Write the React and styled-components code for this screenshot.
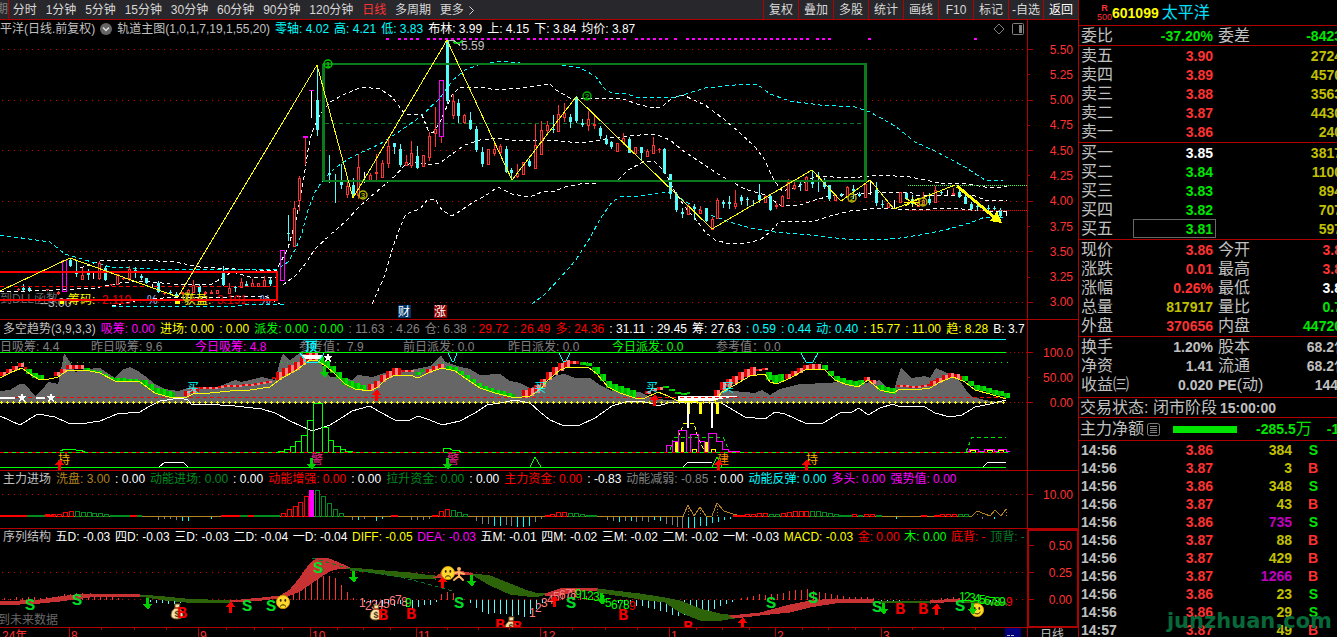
import React from "react";
import styled, { createGlobalStyle } from "styled-components";

const GlobalStyle = createGlobalStyle`
  * { box-sizing: border-box; }
  html, body { margin: 0; background: #000; overflow: hidden; }
  body { font: 12px/14px "Liberation Sans", "Noto Sans CJK SC", sans-serif; color: #c0c0c0; }
  button { font: inherit; color: inherit; background: none; border: 0; padding: 0; margin: 0; cursor: pointer; }
`;

const LINE = "#b00000";
const RED = "#ff3232";
const GREEN = "#00e600";
const CYAN = "#00ffff";
const AQUA = "#54fcfc";
const YELLOW = "#ffff00";
const GOLD = "#c0c000";
const MAG = "#ff00ff";
const GREY = "#808080";
const TXT = "#c0c0c0";

/* ---------- page frame ---------- */
const Screen = styled.div`
  display: grid;
  grid-template-columns: minmax(0, 1fr) 259px;
  height: 100vh;
  overflow: hidden;
`;
const Main = styled.main`
  display: flex;
  flex-direction: column;
  min-width: 0;
`;

/* ---------- toolbar ---------- */
const Toolbar = styled.nav`
  display: flex;
  justify-content: space-between;
  height: 20px;
  background: #28282c;
  border-bottom: 1px solid ${LINE};
  color: #d8d8d8;
  white-space: nowrap;
`;
const Periods = styled.div`
  display: flex;
  align-items: center;
  justify-content: space-between;
  width: 474px;
`;
const Stub = styled.span`
  width: 9px;
  height: 19px;
  line-height: 19px;
  margin-right: -5px;
  border-right: 1px solid ${LINE};
  overflow: hidden;
  direction: rtl;
  color: ${GREY};
`;
const Period = styled.button`
  color: ${(p) => (p.$active ? RED : "inherit")};
`;
const Chevron = styled.svg`
  width: 5px;
  height: 9px;
  margin-left: 5px;
  vertical-align: middle;
`;
const Tools = styled.div`
  display: flex;
`;
const Tool = styled.button`
  width: 35px;
  border-left: 1px solid ${LINE};
  color: ${(p) => (p.$strong ? "#fff" : "inherit")};
`;

/* ---------- chart panes ---------- */
const Pane = styled.section`
  display: grid;
  grid-template-columns: minmax(0, 1fr) 51px;
  flex: none;
  border-bottom: 1px solid ${LINE};
`;
const Plot = styled.div`
  min-width: 0;
  overflow: hidden;
`;
const Legend = styled.header`
  display: flex;
  align-items: center;
  justify-content: ${(p) => (p.$fill ? "space-between" : "flex-start")};
  max-width: ${(p) => (p.$fill ? "1025px" : "none")};
  gap: ${(p) => (p.$fill ? 0 : 5)}px;
  height: ${(p) => p.$height}px;
  padding-left: ${(p) => p.$indent ?? 3}px;
  white-space: nowrap;
  overflow: hidden;
`;
const Item = styled.span`
  flex: none;
  color: ${(p) => p.$color || TXT};
`;
const Corner = styled.span`
  display: flex;
  gap: 7px;
  margin-left: auto;
  padding-right: 3px;
`;
const Canvas = styled.svg`
  display: block;
  width: 100%;
  height: ${(p) => p.$height}px;
  shape-rendering: crispEdges;
`;
const Axis = styled.div`
  display: flex;
  flex-direction: column;
  justify-content: space-between;
  padding: ${(p) => p.$pad};
  border: 0 solid ${LINE};
  border-width: ${(p) => (p.$framed ? "2px 1px 1px 2px" : "0 0 0 1px")};
`;
const Tick = styled.div`
  display: flex;
  align-items: center;
  justify-content: space-between;
  height: 13px;
  padding-right: 5px;
  color: ${RED};
  &::before {
    content: "";
    width: ${(p) => (p.$minor ? 2 : 5)}px;
    height: 1px;
    background: ${LINE};
  }
`;
const TimeAxis = styled.footer`
  display: grid;
  grid-template-columns: minmax(0, 1fr) 51px;
  height: 9px;
  overflow: hidden;
`;
const PeriodName = styled.span`
  padding-left: 12px;
  border-left: 1px solid ${LINE};
`;

/* ---------- quote panel ---------- */
const Side = styled.aside`
  position: relative;
  border-left: 1px solid ${LINE};
  overflow: hidden;
`;
const Block = styled.div`
  width: 272px;
  padding-bottom: ${(p) => p.$foot || 0}px;
  border-bottom: 1px solid ${LINE};
`;
const Title = styled.h1`
  display: flex;
  align-items: center;
  gap: 3px;
  width: 272px;
  height: 26px;
  margin: 0;
  padding-left: 18px;
  border-bottom: 1px solid ${LINE};
  font-size: 16px;
  font-weight: 400;
  color: #00e0ff;
`;
const Flag = styled.span`
  display: flex;
  flex-direction: column;
  align-items: center;
  width: 15px;
  font-size: 9px;
  line-height: 9px;
  color: ${RED};
`;
const Code = styled.strong`
  font-size: 14px;
  color: ${YELLOW};
  margin-left: -3px;
`;
const Table = styled.table`
  width: 271px;
  table-layout: fixed;
  border-collapse: separate;
  border-spacing: 0;
`;
const Row = styled.tr`
  height: ${(p) => p.$height || 19}px;
`;
const Name = styled.th`
  padding: 0 0 0 2px;
  font-size: 16px;
  line-height: 18px;
  font-weight: 400;
  text-align: left;
  white-space: nowrap;
  color: ${TXT};
`;
const Num = styled.td`
  padding: 0 ${(p) => p.$end ?? 3}px 0 ${(p) => (p.$left ? 2 : 0)}px;
  font-size: 14px;
  line-height: 16px;
  font-weight: 700;
  text-align: ${(p) => (p.$left ? "left" : "right")};
  white-space: nowrap;
  color: ${(p) => p.$color || TXT};
  outline: ${(p) => (p.$boxed ? "1px solid #686868" : "none")};
  outline-offset: -1px;
`;
const Small = styled.span`
  font-size: 16px;
  font-weight: 400;
`;
const Status = styled.p`
  display: flex;
  align-items: center;
  height: ${(p) => p.$height}px;
  margin: 0;
  padding-left: 1px;
  font-size: 16px;
  white-space: nowrap;
`;
const NoteIcon = styled.svg`
  width: 13px;
  height: 13px;
  margin-left: 3px;
`;
const Strong = styled.b`
  margin-left: ${(p) => p.$gap || 0}px;
  font-size: 14px;
  color: ${(p) => p.$color || TXT};
`;
const FlowBar = styled.span`
  width: 64px;
  height: 7px;
  margin: 0 19px 0 13px;
  background: ${GREEN};
`;
const Watermark = styled.div`
  position: absolute;
  top: 609px;
  right: 5px;
  font: 700 21px/24px "DejaVu Sans", sans-serif;
  color: #06693a;
`;

/* ---------- price chart data ---------- */
/* x, high, low, body top, body bottom, kind */
const CANDLES = `
18 288 291 289 290 r;23 284 291 288 290 c;29 286 292 288 290 c;47 289 291 289 290 r;58 291 295 292 294 r;70 259 267 260 266 c;76 261 277 272 274 c;
82 268 280 275 279 r;88 269 280 273 275 c;93 273 279 276 276 w;99 261 280 263 278 r;105 266 281 268 280 c;
111 284 286 284 285 r;117 274 284 274 284 r;123 277 280 278 279 r;129 266 281 269 278 r;135 267 278 270 272 c;
141 274 280 276 278 c;146 278 284 278 283 c;152 284 288 286 286 w;158 281 293 283 292 c;164 292 295 293 294 r;
170 290 295 292 293 c;176 292 297 294 296 c;182 292 295 292 294 r;188 289 295 290 294 r;193 280 293 285 292 r;
199 284 294 286 292 c;205 291 295 292 294 r;211 290 294 292 294 r;217 290 294 290 293 r;223 266 286 273 285 c;
229 283 294 288 293 r;235 286 292 287 288 c;241 278 288 282 287 r;246 281 287 284 286 c;252 279 287 283 286 r;
258 283 287 283 286 r;264 276 287 280 286 r;270 278 286 280 284 c;288 215 241 233 234 c;294 201 246 208 246 r;
299 176 211 178 200 r;305 137 165 140 140 l;311 91 118 95 95 w;317 65 136 100 130 c;329 155 183 173 175 c;
335 174 203 174 174 c;341 164 189 182 185 c;347 182 198 186 194 r;353 178 198 185 194 c;358 154 199 167 195 r;
364 172 183 176 176 w;370 173 182 175 180 r;376 154 181 172 174 r;382 160 177 163 177 r;388 137 168 146 163 r;
394 143 154 143 147 c;400 144 167 149 165 c;406 155 166 162 165 r;411 141 168 153 165 r;417 146 169 156 168 c;
423 155 166 155 166 r;429 132 161 136 157 r;435 107 147 129 133 r;441 137 143 140 140 l;447 40 104 40 101 c;
453 94 119 101 115 r;458 99 123 103 116 c;464 114 124 115 122 r;470 112 130 120 129 c;476 126 152 129 150 c;
482 147 167 152 164 c;488 149 164 149 164 r;494 142 156 149 153 r;500 144 154 146 152 r;506 146 173 149 172 c;
511 168 181 170 173 c;517 164 178 173 176 r;523 162 175 162 174 r;529 159 167 161 166 c;535 124 169 145 168 r;
541 121 155 130 154 r;547 121 135 125 130 r;553 115 133 129 130 c;558 105 132 114 131 r;564 103 122 113 117 r;
570 114 128 117 122 c;576 96 123 97 121 c;582 119 127 123 125 c;588 111 131 119 125 r;594 115 129 124 126 r;
600 126 139 128 136 c;606 135 145 139 144 c;611 141 149 142 147 c;617 143 152 143 151 r;623 133 145 138 142 r;
629 137 153 139 153 c;635 147 154 147 153 r;641 147 161 147 153 c;647 149 157 151 156 r;653 137 153 145 153 r;
659 148 153 149 150 r;664 148 174 149 173 c;670 174 199 174 193 c;676 192 212 194 210 c;682 208 218 212 214 c;
688 204 215 206 214 r;694 204 220 207 209 c;700 206 214 210 213 r;706 208 222 208 221 c;712 217 230 219 229 r;
717 198 219 200 218 r;723 200 208 202 204 c;729 196 209 202 204 c;735 190 209 203 206 r;741 195 205 197 201 c;
747 197 206 199 200 c;753 200 206 202 202 c;759 184 203 195 200 c;765 195 203 196 202 r;770 195 211 196 210 c;
776 203 209 205 207 r;782 195 207 196 206 r;788 179 199 182 198 r;794 180 190 185 188 r;800 182 191 184 185 c;
806 176 191 177 190 r;812 170 188 182 184 c;818 172 192 182 182 c;824 178 189 181 187 c;829 185 201 185 199 c;
835 194 201 195 200 r;841 193 197 194 195 c;847 186 197 187 196 r;853 185 199 189 191 c;859 192 197 194 196 c;
865 184 198 184 197 r;870 180 195 186 186 w;876 182 206 190 203 c;882 200 208 204 205 c;888 202 208 203 207 r;
894 200 208 203 203 w;900 192 203 192 202 r;906 192 200 193 199 c;912 195 206 199 204 c;918 199 207 203 206 r;
923 192 206 200 204 r;929 193 205 199 203 c;935 186 203 190 202 r;941 190 195 192 193 c;947 190 195 192 192 w;
953 188 195 193 195 r;959 190 198 192 197 c;965 194 204 197 204 c;971 202 211 204 209 c;977 204 211 206 207 c;
988 205 211 208 209 c;994 206 211 208 209 c;1000 208 218 210 216 c;1006 211 216 213 213 w`
  .trim().split(";").map((s) => s.trim().split(" "));

const ZIGZAG = "0,291 70,258 178,297 317,65 353,198 447,40 512,180 576,97 712,229 812,170 841,201 870,180 894,209 955,185";
const WHITE_LINES = [
  "80,268 100,261 140,260 175,262 200,267 235,269 276,271 288,248 296,220 302,190 308,150 312,132 320,115 330,102 345,94 362,87 380,89 392,97 405,114 422,115 428,130 433,133 440,122 452,95 460,87 480,87 497,90 520,88 550,84 556,90 570,98 620,98 640,105 655,108 662,107 672,98 683,95 705,105 725,120 740,133 755,147 765,160 770,172 774,180 782,191 798,187 815,176 850,178 880,175 910,177 940,183 960,183 985,187 1000,188 1007,186",
  "0,292 55,290 95,288 120,283 145,281 170,284 210,285 232,272 250,277 276,278",
  "283,285 296,275 306,263 315,249 330,235 345,222 360,206 375,193 395,176 405,165 417,162 430,165 440,163 452,154 465,145 480,140 500,138 515,141 550,140 580,143 595,141 610,138 640,135 655,134 670,140 682,150 700,162 715,172 730,181 745,189 765,195 780,205 800,205 815,200 830,196 870,193 880,192 910,192 915,195 975,196 985,200 1007,201",
  "372,304 385,275 392,250 400,227 406,214 420,209 428,199 435,199 442,210 452,216 460,211 475,201 485,196 498,187 512,194 530,197 542,192 555,191 565,187 580,184 597,183",
  "618,180 628,170 645,161 655,162 665,172 675,192 685,207 698,222 705,232 715,240 730,244 745,243 760,240 770,232 780,221 812,222 830,216 850,211 880,208 910,210 950,208 985,211 1007,211",
  "112,306 140,300 175,297 230,297 265,296 284,306",
];
const CYAN_LINES = [
  "0,235 50,242 65,254 85,260 110,267 150,269 276,270 288,262 296,248 302,233 308,210 315,192 323,180 335,168 350,158 358,154 380,144 400,131 420,117 440,98 453,80 465,70 478,65 500,61 520,63",
  "562,65 580,68 595,76 605,89 612,93 628,94 635,97 672,98 683,95 705,88 735,85 757,84 770,94 790,101 820,105 855,107 870,112 895,126 915,142 935,151 950,159 965,167 977,175 985,180 1003,181",
  "112,306 235,306 250,304 284,305",
  "532,304 545,294 560,278 575,261 590,238 600,219 612,202 620,197 640,196 664,192 675,194 683,200 705,213 730,222 750,228 775,232 810,235 845,239 880,240 900,238 920,235 945,230 970,223 985,217 1003,218",
];
const DOT_RUNS = [[387, 387], [399, 417], [428, 518], [528, 596], [606, 626], [636, 666], [675, 675], [687, 807], [817, 829], [869, 869], [975, 975]];
const DOTS = DOT_RUNS.flatMap(([a, b]) => Array.from({ length: Math.floor((b - a) / 6) + 1 }, (_, i) => a + i * 6));

const COLORS = { r: RED, c: AQUA, w: "#fff", l: RED };

function Candle({ d }) {
  const kind = d[5];
  const [x, hi, lo, top, bottom] = d.slice(0, 5).map(Number);
  const color = COLORS[kind];
  const h = bottom - top;
  return (
    <g fill={color}>
      {kind === "r" && h > 2 ? (
        <>
          <rect x={x} y={hi} width="1" height={Math.max(0, top - hi)} />
          <rect x={x} y={bottom} width="1" height={Math.max(0, lo - bottom)} />
          <rect x={x - 0.5} y={top + 0.5} width="2" height={h} fill="#000" stroke={color} />
        </>
      ) : (
        <>
          <rect x={x} y={hi} width="1" height={lo - hi} />
          {h > 0 && <rect x={x - 1} y={top} width="3" height={h} />}
        </>
      )}
    </g>
  );
}

function Grid({ rows, to = 1026 }) {
  return rows.map((y) => (
    <line key={y} x1="2" x2={to} y1={y + 0.5} y2={y + 0.5} stroke="#d20000" strokeDasharray="1 5" />
  ));
}

function Mark({ x, y, n, color }) {
  return (
    <g stroke={color} fill="none" shapeRendering="auto">
      <circle cx={x} cy={y} r="4" strokeWidth="1.4" />
      <text x={x} y={y + 3} fontSize="8" fontWeight="700" textAnchor="middle" fill={color} stroke="none">{n}</text>
    </g>
  );
}

function Label({ x, y, color = GREY, size = 12, bold, anchor, family, children }) {
  return (
    <text x={x} y={y + Math.round(size * 0.37)} fill={color} fontSize={size} fontFamily={family} fontWeight={bold ? 700 : 400} textAnchor={anchor}>
      {children}
    </text>
  );
}

function Arrow({ x, y, up }) {
  const s = up ? -1 : 1;
  return (
    <path
      d={`M${x - 1},${y - 6 * s}h3v${6 * s}h3l-4,${6 * s}l-5,${-6 * s}h3z`}
      fill={up ? "#f00" : "#00d000"}
    />
  );
}

function PriceChart() {
  return (
    <Canvas $height={281}>
      <g transform="translate(0,-38)">
        <Grid rows={[49, 100, 150, 201, 251, 302]} />
        {DOTS.map((x) => <rect key={x} x={x - 1} y="37" width="3" height="3" fill={MAG} />)}
        <line x1="325" x2="864" y1="123.5" y2="123.5" stroke="#0a7a28" strokeDasharray="4 3" />
        <g fill="none" stroke="#fff" strokeDasharray="4 3">
          {WHITE_LINES.map((p) => <polyline key={p} points={p} />)}
        </g>
        <g fill="none" stroke={CYAN} strokeDasharray="4 3">
          {CYAN_LINES.map((p) => <polyline key={p} points={p} />)}
        </g>
        {CANDLES.map((d) => <Candle key={d[0]} d={d} />)}
        <g fill="none" stroke={MAG}>
          <rect x="62.5" y="260.5" width="4" height="31" />
          <rect x="280.5" y="250.5" width="4" height="30" />
          <rect x="439.5" y="80.5" width="4" height="56" />
        </g>
        <rect x="303" y="136" width="5" height="2" fill={MAG} />
        <rect x="309" y="90" width="5" height="1" fill={MAG} />
        <path d="M908,185.5H1027" stroke="#40ff40" strokeDasharray="1 1" />
        <path d="M908,210.5H1027" stroke="#f00" strokeDasharray="1 1" />
        <Label x="0" y={299} color="#686868">到DLL函数</Label>
        <Label x="40" y={303} color={TXT}>--3.00</Label>
        <rect x="60" y="301" width="4" height="3" fill={YELLOW} />
        <Label x="68" y={300} color={YELLOW}>筹码:</Label>
        <Label x="102" y={300} color="#e00000">2.119</Label>
        <Label x="147" y={300} color="#a0c0ff">%</Label>
        <rect x="175" y="301" width="5" height="3" fill={YELLOW} />
        <Label x="184" y={300} color={YELLOW}>获盈:</Label>
        <Label x="217" y={300} color="#e00000">3.191</Label>
        <Label x="260" y={300} color="#a0c0ff">%</Label>
        <path d="M0,286.5H276" stroke="#f00" strokeDasharray="4 3" />
        <path d="M0,272H277V300H0" fill="none" stroke="#f00" strokeWidth="2" />
        <rect x="323.5" y="64" width="542" height="117" fill="none" stroke="#0a7a1c" strokeWidth="2" />
        <path d="M323.5,64V181M865.5,64V181" stroke="#0a7a1c" strokeWidth="3" />
        <polyline points={ZIGZAG} fill="none" stroke={YELLOW} />
        <path d="M957,186L994,217" stroke={YELLOW} strokeWidth="3" />
        <path d="M1002,223L990,221L997,211Z" fill={YELLOW} />
        <path d="M905,198l14,8M905,206l14,-8M912,197v10M904,202h16" stroke={YELLOW} />
        <Mark x={328} y={64} n="1" color="#00c800" />
        <path d="M453,42a5,3 0 0 0 9,-2" stroke="#00c800" strokeWidth="2" fill="none" />
        <Mark x={587} y={96} n="2" color="#00b400" />
        <Mark x={363} y={195} n="3" color="#b4b400" />
        <Mark x={852} y={198} n="2" color="#b4b400" />
        <Mark x={923} y={202} n="2" color="#b4b400" />
        <Mark x={187} y={297} n="1" color="#b4b400" />
        <path d="M449,40.5h5l6,5" fill="none" stroke={TXT} />
        <Label x="461" y={46} color={TXT}>5.59</Label>
        <rect x="398" y="305" width="13" height="13" fill="#003468" />
        <Label x="398" y={312} color="#fff">财</Label>
        <rect x="434" y="305" width="13" height="13" fill="#8c0000" />
        <Label x="434" y={312} color="#fff">涨</Label>
      </g>
    </Canvas>
  );
}

/* ---------- trend chart ---------- */
const TREND = "0,378 12,372 22,368 30,374 38,379 45,380 58,377 68,370 85,370 100,373 115,381 140,382 155,393 172,398 187,397 195,393 210,393 230,391 250,390 270,387 282,378 295,371 310,360 318,361 327,367 335,374 345,384 355,389 370,391 378,387 385,380 395,375 410,375 418,378 430,372 442,368 455,371 468,380 480,388 495,393 515,398 530,396 540,390 547,381 560,370 568,367 588,367 597,374 608,387 620,393 635,398 645,398 658,392 668,396 680,402 716,400 722,392 735,385 750,376 765,374 770,382 777,384 790,378 805,370 815,369 825,370 835,380 845,384 858,387 868,380 880,390 893,393 900,389 915,390 930,388 940,382 953,377 965,382 975,390 990,394 1006,399";
const TREND_POINTS = TREND.split(" ").map((p) => p.split(",").map(Number));
const trendAt = (x) => {
  const i = TREND_POINTS.findIndex((p) => p[0] >= x);
  if (i < 0) return 399;
  if (i === 0) return TREND_POINTS[0][1];
  const [a, b] = TREND_POINTS[i - 1];
  const [c, d] = TREND_POINTS[i];
  return Math.round(b + ((x - a) / (c - a)) * (d - b));
};
/* from, to, direction, lift above the trend line, thickness */
const BANDS = [
  [0, 27, "u", 5, 4], [26, 45, "d", 4, 5], [54, 84, "u", 5, 4], [84, 114, "d", 2, 2], [114, 142, "d", 3, 3], [142, 175, "d", 6, 6],
  [184, 200, "u", 6, 5], [200, 276, "u", 6, 2], [276, 320, "u", 8, 8], [318, 360, "d", 6, 7], [342, 368, "d", 5, 5],
  [368, 402, "u", 7, 7], [402, 415, "u", 5, 2], [415, 426, "d", 6, 3], [426, 446, "u", 4, 4], [446, 516, "d", 4, 4],
  [522, 570, "u", 7, 8], [570, 580, "u", 6, 3], [580, 596, "d", 5, 3], [594, 636, "d", 7, 7], [645, 663, "u", 6, 3], [663, 690, "d", 9, 2],
  [714, 756, "u", 9, 8], [756, 768, "u", 6, 2], [766, 785, "d", 8, 8], [785, 822, "u", 5, 5], [822, 866, "d", 5, 5], [864, 878, "u", 4, 4],
  [878, 896, "d", 5, 6], [897, 936, "u", 4, 2], [930, 964, "u", 5, 5], [962, 1010, "d", 6, 5],
];
const BAND_CELLS = BANDS.flatMap(([a, b, dir, lift, h]) =>
  Array.from({ length: Math.floor((b - a) / 3) }, (_, i) => {
    const x = a + i * 3;
    const tint = dir === "u" ? (i % 2 ? "#ff8080" : "#e00000") : i % 2 ? "#00e000" : "#00b400";
    const step = a + Math.floor(i / 2) * 6 + 3;
    return { x, y: trendAt(step) - lift, h, tint };
  })
);
const SHADE = "0,403 0,391 10,390 20,384 25,384 35,396 45,386 48,382 58,384 62,365 64,353 70,362 75,372 85,369 100,368 115,378 122,370 130,367 138,371 145,376 155,384 165,389 178,391 190,387 215,388 225,384 235,380 241,382 250,380 262,377 275,380 281,358 283,354 290,360 300,353 315,356 322,365 330,377 345,378 352,380 358,375 372,377 390,371 410,370 430,366 438,358 441,355 445,362 460,367 470,369 480,375 500,374 510,381 520,383 530,388 540,385 550,380 557,375 565,374 575,378 590,378 600,385 612,391 617,388 625,392 640,392 650,397 665,400 716,398 722,390 755,393 762,390 770,395 780,389 800,384 830,383 850,380 865,383 880,380 893,394 898,376 901,368 912,378 925,376 930,378 936,368 950,374 960,381 968,393 973,397 985,400 1005,403";
const MIRROR = "0,416 20,425 28,420 38,414 55,417 68,423 80,424 100,421 117,414 140,412 150,406 160,401 180,398 188,400 192,405 205,404 235,406 262,409 275,413 290,421 312,431 330,425 343,417 352,411 370,406 378,411 395,420 410,420 418,416 430,420 442,425 460,421 475,413 487,405 500,403 515,400 530,403 540,412 550,420 562,425 580,425 595,418 612,406 625,402 640,401 650,403 658,406 668,403 680,402 720,402 728,407 745,417 765,419 775,412 785,414 805,423 823,423 840,413 852,412 859,408 868,415 880,408 893,404 900,407 915,406 925,407 935,413 950,417 962,415 975,407 990,404 1006,400";
const STEPS = [[278, 451], [284, 449], [290, 446], [295, 441], [301, 435], [307, 420], [313, 403], [322, 427], [328, 440], [333, 446], [340, 449], [345, 451], [352, 452]];
const CHART_NOTES = [
  [-12, "前日吸筹: 4.4", GREY], [91, "昨日吸筹: 9.6", GREY], [195, "今日吸筹: 4.8", MAG], [299, "参考值：7.9", GREY],
  [403, "前日派发: 0.0", GREY], [508, "昨日派发: 0.0", GREY], [612, "今日派发: 0.0", "#00ff00"], [716, "参考值：0.0", GREY],
];

function Star({ x, y }) {
  return <path transform={`translate(${x},${y})`} d="M0,-5l1,4h4l-3,2l1,4l-3,-2l-3,2l1,-4l-3,-2h4z" fill="#fff" />;
}

function TrendChart() {
  return (
    <Canvas $height={132}>
      <g transform="translate(0,-338)">
        {CHART_NOTES.map(([x, t, c]) => <Label key={x} x={x} y={347} color={c}>{t}</Label>)}
        <polygon points={SHADE} fill="#666" />
        <path d="M0,339.5H1006" stroke={CYAN} />
        <path d="M0,352.5H1006" stroke="#00ff00" />
        <path d="M1006,352.5H1027M1006,402.5H1027" stroke={LINE} strokeDasharray="1 3" />
        <path d="M5,362.5H1008" stroke="#00ff00" strokeDasharray="1 5" />
        <path d="M0,397.5H1008" stroke="#f00" strokeDasharray="4 3" />
        {BAND_CELLS.map((c, i) => <rect key={i} x={c.x} y={c.y} width="3" height={c.h} fill={c.tint} />)}
        <polyline points={TREND} fill="none" stroke={YELLOW} />
        <polyline points={MIRROR} fill="none" stroke="#fff" />
        <path d="M0,402.5H1008" stroke={YELLOW} strokeDasharray="3 3" />
        <path d="M1,402.5H1008" stroke={YELLOW} strokeWidth="3" strokeDasharray="1 5" />
        <path d="M0,397.5H15M36,397.5H45" stroke="#fff" strokeWidth="2" />
        <path d="M302,355h21l-3,4h-15z" fill="#fff" />
        <path d="M300,353l6,9h13l5,-9M448,353l4,8h2l3,-8M559,353l4,8h3l4,-8M801,353l5,9h7l5,-9" fill="none" stroke={CYAN} />
        <Star x={22} y={397} />
        <Star x={51} y={397} />
        <Star x={328} y={357} />
        <Label x="305" y={347} color={CYAN} bold>顶</Label>
        {[193, 540, 652, 728].map((x) => <Label key={x} x={x - 6} y={388} color={CYAN}>买</Label>)}
        <Arrow x={324} y={372} />
        <Arrow x={376} y={395} up />
        <Arrow x={654} y={400} up />
        <path d="M678,396h62l-20,3l-8,2h-34z" fill="#fff" />
        <path d="M680,397.5H735" stroke="#f00" strokeDasharray="4 3" />
        <path d="M687,402h3v12h-3zM699,402h3v12h-3zM716,402h3v12h-3z" fill={YELLOW} />
        <path d="M688,402V428M712,402V428" stroke="#fff" strokeWidth="2" />
        <polyline points={STEPS.flatMap(([x, y], i) => (i ? [`${x},${STEPS[i - 1][1]}`, `${x},452`, `${x},${y}`] : [`${x},452`, `${x},${y}`])).join(" ")} fill="none" stroke="#00ff00" />
        <path d="M60,451l5,-2h8l3,1h4l5,2M443,452v-4h6l3,2h6l3,2" fill="none" stroke="#00ff00" />
        <path d="M0,452.5H1008" stroke="#00ff00" />
        <path d="M0,452.5H1008" stroke="#f00" strokeDasharray="4 4" />
        <path d="M670,450L674,437H723L729,450M966,452L972,437H1006" fill="none" stroke="#00e000" strokeDasharray="4 3" />
        <path d="M678,437L684,423H694L698,438L704,450" fill="none" stroke={YELLOW} strokeDasharray="4 3" />
        <path d="M666.5,452V445.5H672.5V441.5H678.5V430.5H686.5V452M672.5,452V445M678.5,452V441M690.5,452V434.5H698.5V452M698.5,441.5H704.5V452M708.5,452V433.5H716.5V441.5H722.5V449.5H728.5V451.5H740M967,451.5h2v-2h9v2h6v-2h10v2h4v-2h8v2h4" fill="none" stroke={MAG} />
        <path d="M675,442h3v10h-3zM681,442h3v10h-3zM705,442h3v10h-3z" fill={YELLOW} />
        <path d="M692,451.5v-2h4v2M711,451.5v-2h4v2M970,452v-2h5v2M987,452v-2h5v2M998,452v-2h5v2" fill="none" stroke={YELLOW} />
        <path d="M0,467.5H1006" stroke="#00ff00" />
        <path d="M159,467l6,-5h18l5,5M683,467l5,-5h24M983,467l5,-5h18" fill="none" stroke="#fff" />
        <path d="M530,467l5,-10l6,10M712,467l5,-10l5,10" fill="none" stroke="#00ff00" />
        <Label x="58" y={460} color="#ffb400">持</Label>
        <Label x="311" y={460} color="#f02890">警</Label>
        <Label x="447" y={460} color="#f02890">警</Label>
        <Label x="717" y={460} color="#ff8c00">建</Label>
        <Label x="806" y={460} color="#ffb400">持</Label>
        <Arrow x={59} y={465} up />
        <Arrow x={718} y={465} up />
        <Arrow x={806} y={465} up />
        <Arrow x={311} y={464} />
        <Arrow x={447} y={464} />
      </g>
    </Canvas>
  );
}

/* ---------- momentum chart ---------- */
const R3 = "#f00";
const G3 = "#008c1e";
const BOXES = [
  [45, 514, R3], [51, 514, R3], [57, 514, R3], [63, 512, R3], [69, 511, R3], [75, 511, G3], [81, 512, G3], [87, 512, G3], [92, 513, G3], [98, 513, G3], [104, 514, G3],
  [281, 513, R3], [287, 509, R3], [293, 506, R3], [298, 502, R3], [304, 496, R3], [315, 490, G3], [321, 496, G3], [327, 503, G3], [333, 509, G3], [339, 513, G3],
  [439, 511, R3], [445, 509, R3], [451, 510, G3], [457, 512, G3], [463, 514, G3],
  [550, 514, R3], [556, 512, R3], [562, 512, R3], [568, 513, G3], [574, 513, G3], [580, 514, G3],
  [745, 514, R3], [751, 514, R3], [757, 513, R3], [763, 513, R3], [769, 514, G3], [775, 514, G3], [781, 513, R3], [787, 512, R3], [793, 511, R3], [799, 511, R3], [804, 511, R3],
  [810, 511, G3], [816, 511, G3], [822, 512, G3], [828, 513, G3], [834, 514, G3], [852, 514, R3], [864, 514, R3], [870, 514, R3],
  [940, 514, R3], [946, 514, R3], [952, 514, R3], [958, 514, G3], [964, 514, G3],
];
const FLATS = [
  [0, 40, R3], [27, 45, G3], [110, 142, G3], [46, 54, R3], [130, 137, R3], [221, 240, R3], [240, 262, G3], [248, 254, R3], [262, 280, G3],
  [391, 398, R3], [432, 438, R3], [545, 550, R3], [586, 597, G3], [733, 745, R3], [839, 852, G3], [858, 863, G3], [876, 882, G3], [921, 927, R3], [934, 940, R3],
];
const DROPS = [
  [158, 519], [164, 518], [170, 518], [176, 519], [182, 520, 1], [188, 520, 1], [211, 518, 1], [352, 519], [358, 519, 1], [364, 518], [376, 520, 1], [382, 518, 1], [411, 519], [417, 519], [423, 519], [429, 518],
  [476, 520], [482, 523], [488, 523], [494, 525, 1], [500, 525, 1], [506, 524], [511, 525], [517, 526, 1], [523, 526, 1], [529, 525, 1], [535, 521], [541, 518],
  [607, 519], [613, 520], [619, 521, 1], [625, 520], [631, 520, 1], [636, 521], [642, 520], [648, 521], [654, 519, 1], [660, 520, 1], [666, 523], [672, 524], [677, 526], [682, 527],
  [688, 527, 1], [694, 527, 1], [700, 525, 1], [706, 525, 1], [712, 522, 1], [718, 521, 1], [724, 519, 1], [730, 518, 1], [896, 518, 1], [982, 518], [994, 518, 1],
];

function MomentumChart() {
  return (
    <Canvas $height={41}>
      <g transform="translate(0,-487)">
        <Grid rows={[494]} />
        <path d="M0,516.5H683L688,505L694,516L700,507L706,516H712L717,503L724,511L733,514L740,516H972L977,511L985,514L990,516L995,510L1001,516L1006,509" fill="none" stroke="#b4821e" />
        <path d="M688,505V516M700,507V516M717,503V516M977,511V516M1006,509V516" stroke="#b4821e" strokeDasharray="1 2" />
        {DROPS.map(([x, y, hot]) => <rect key={x} x={x} y="517" width="1" height={y - 516} fill={hot ? CYAN : GREY} />)}
        {FLATS.map(([a, b, c]) => <rect key={a} x={a} y="515" width={b - a} height="2" fill={c} />)}
        {BOXES.map(([x, y, c]) => <rect key={x} x={x + 0.5} y={y + 0.5} width="4" height={516 - y} fill="none" stroke={c} />)}
        <rect x="309" y="490" width="5" height="27" fill={MAG} />
      </g>
    </Canvas>
  );
}

/* ---------- sequence chart ---------- */
const RIBBONS = [
  ["#c83232", "0,602 40,600 60,597 75,595 90,594 140,595 140,596 90,597 75,599 60,601 40,603 0,605"],
  ["#2d640a", "140,595 165,597 185,599 230,601 230,603 185,602 165,600 140,596"],
  ["#c83232", "230,601 262,598 280,596 290,590 300,578 306,569 312,562 318,558 326,558 337,562 350,568 340,568 330,571 320,577 310,584 300,591 285,597 262,600 230,602"],
  ["#2d640a", "350,568 385,571 410,573 425,575 435,576 435,579 410,578 385,574 350,570"],
  ["#c83232", "435,577 442,573 460,571 473,574 460,574 442,577"],
  ["#2d640a", "473,574 490,576 510,584 525,590 535,593 550,593 535,597 510,594 490,585 473,575"],
  ["#c83232", "545,594 560,589 575,588 597,588 597,590 575,591 560,595 545,596"],
  ["#2d640a", "597,589 640,594 665,598 680,601 700,609 720,614 735,616 735,618 715,621 700,620 680,612 665,602 640,599 597,592"],
  ["#c83232", "730,616 760,613 790,605 810,601 835,599 873,600 873,602 835,603 810,607 790,612 760,615 735,618"],
  ["#2d640a", "873,601 930,601 930,603 873,602"],
  ["#c83232", "930,601 958,599 958,601 930,603"],
  ["#2d640a", "958,600 1006,603 1006,605 958,602"],
];
const run = (from, heights) => heights.map((h, i) => [from + i * 6, h]);
const HIST = [
  ...run(4, [2, 1, 3, 2, 3, 3, 2, 3, 3, 4, 6, 6, 7, 7, 6, 6, 5, 4, 4, 2]),
  ...run(150, [-2, -3, -3, -4, -4, -3, -2, -2]), ...run(287, [6, 9, 14, 18, 20, 22, 24, 24, 22, 15, 8, 2]),
  ...run(364, [-2, -3, -5, -6, -5, -6, -4, -7, -9, -7, -5, -5, -2]), ...run(441, [6, 8, 7]),
  ...run(470, [-3, -8, -12, -14, -13, -14, -14, -16, -15, -17, -14, -9, -3]), ...run(556, [3, 5, 6, 6, 5, 4, 3]),
  ...run(618, [-3, -5, -4, -6, -6, -8, -9, -11, -12, -15, -16, -15, -15, -14, -13, -12, -9, -6, -4, -2]),
  ...run(741, [2, 3, 4, 6, 5, 6, 6, 7, 9, 10, 10, 11, 9, 8, 7, 6, 5, 4, 3, 3, 3, 3, 2]), ...run(881, [-1, -2, -2, -1]),
  ...run(941, [2, 2, 3, 2]), ...run(972, [-3, -4, -4, -3, -2]),
];
const SIGNS = [
  ["S", 30, 604], ["S", 77, 599], ["S", 247, 605], ["S", 271, 605], ["S", 318, 567], ["S", 459, 602], ["S", 571, 602], ["S", 771, 602], ["S", 813, 597], ["S", 877, 606], ["S", 960, 605],
  ["B", 182, 612], ["B", 383, 614], ["B", 411, 613], ["B", 500, 624], ["B", 517, 626], ["B", 623, 614], ["B", 688, 626], ["B", 900, 608], ["B", 923, 608],
];
const PINK = "#ff8080";
const COUNTS = [
  ...[603, 606, 605, 605, 604, 601, 600, 602].map((y, i) => [359 + i * 6, y, i + 1, PINK]), [405, 603, 9, "#00ff00"],
  [529, 613, 1, PINK], [535, 608, 2, PINK], [541, 603, 3, PINK], [547, 600, 4, PINK], [553, 597, 5, PINK], [559, 595, 6, PINK], [565, 594, 7, PINK], [570, 594, 8, PINK], [575, 594, 9, "#00ff00"],
  [581, 595, 1, "#00ff00"], [587, 596, 2, "#00ff00"], [593, 597, 3, "#00ff00"], [599, 600, 4, "#00ff00"], [605, 603, 5, "#00ff00"], [611, 605, 6, "#00ff00"], [617, 605, 7, "#00ff00"], [623, 605, 8, "#00ff00"], [629, 606, 9, "#f00"],
  ...[597, 597, 598, 599, 600, 601, 602, 602, 602].map((y, i) => [959 + i * 5, y, i + 1, "#00ff00"]), [1006, 602, 9, "#f00"],
];

function Face({ x, y, happy }) {
  return (
    <g transform={`translate(${x},${y})`} shapeRendering="auto">
      <circle r="6.6" fill="#ffd82d" stroke="#c89600" />
      <ellipse cx="-2.3" cy="-1.6" rx="0.9" ry="1.4" fill="#321e00" />
      <ellipse cx="2.3" cy="-1.6" rx="0.9" ry="1.4" fill="#321e00" />
      <path d={happy ? "M-3.500,2Q0,6 3.500,2" : "M-3,4.500Q0,1 3,4.500"} fill="none" stroke="#321e00" />
    </g>
  );
}

function MoneyBag({ x, y }) {
  return (
    <g transform={`translate(${x},${y})`} shapeRendering="auto">
      <path d="M-2,-8h5l-1,4q5,4 4,8q-1,3 -6,3q-6,0 -6,-4q0,-4 4,-7z" fill="#f5e1aa" stroke="#785a28" />
      <path d="M-2,-4h4" stroke="#a03214" strokeWidth="1.5" />
      <text x="0" y="5" fontSize="9" fontWeight="700" textAnchor="middle" fill="#503c14">$</text>
    </g>
  );
}

function Runner({ x, y }) {
  return (
    <g transform={`translate(${x},${y})`} shapeRendering="auto" stroke="#ffb464" strokeWidth="2" fill="none" strokeLinecap="round">
      <circle cx="0" cy="-5" r="1" />
      <path d="M-4,-1L0,-2L5,0M0,-2V2L-5,6M0,2L4,6" />
    </g>
  );
}

function SequenceChart() {
  return (
    <Canvas $height={82}>
      <g transform="translate(0,-545)">
        <Grid rows={[572, 599]} />
        {HIST.map(([x, h]) => (
          <rect key={x} x={x} y={h > 0 ? 600 - h : 600} width="1" height={Math.abs(h)} fill={h > 0 ? RED : AQUA} />
        ))}
        {RIBBONS.map(([c, p]) => <polygon key={p} points={p} fill={c} stroke={c} />)}
        <polyline points="312,558 330,563 350,569 400,577 420,582 453,591" fill="none" stroke="#0a7a28" strokeDasharray="4 3" />
        {COUNTS.map(([x, y, n, c]) => <Label key={x} x={x} y={y} color={c}>{n}</Label>)}
        <Face x={283} y={602} />
        <Arrow x={442} y={582} up />
        <Face x={448} y={573} />
        <Runner x={459} y={574} />
        <Face x={977} y={610} happy />
        <MoneyBag x={177} y={612} />
        <MoneyBag x={376} y={613} />
        <MoneyBag x={511} y={625} />
        {[[147, 604], [353, 577], [471, 581], [601, 599], [883, 609], [972, 609]].map(([x, y]) => <Arrow key={x} x={x} y={y} />)}
        {[[230, 607], [554, 601], [742, 623], [936, 609]].map(([x, y]) => <Arrow key={x} x={x} y={y} up />)}
        {SIGNS.map(([t, x, y]) => (
          <Label key={x} x={x} y={y} size={17} bold anchor="middle" family="Liberation Mono" color={t === "S" ? "#00dc28" : "#f00000"}>{t}</Label>
        ))}
        <Label x="-2" y={620} color="#686868">到未来数据</Label>
      </g>
    </Canvas>
  );
}

const MONTHS = [[69, "8"], [198, "9"], [310, "10"], [416, "11"], [540, "12"], [669, "1"], [775, "2"], [881, "3"]];
const MINOR = [101, 134, 166, 226, 254, 282, 337, 363, 390, 447, 478, 509, 572, 605, 637, 696, 722, 749, 802, 828, 855, 912, 943, 975];

function TimeScale() {
  return (
    <Canvas $height={9}>
      {MINOR.map((x) => <rect key={x} x={x} y="0" width="1" height="2" fill={LINE} />)}
      <text x="2" y="12" fill={RED} fontSize="12">24年</text>
      {MONTHS.map(([x, t]) => (
        <g key={x}>
          <rect x={x} y="0" width="1" height="9" fill={LINE} />
          <text x={x + 2} y="12" fill={RED} fontSize="12">{t}</text>
        </g>
      ))}
      <rect x="1005" y="0" width="16" height="9" fill="#00007d" />
      <path d="M1007,7.500h3M1011,7.500h3" stroke={TXT} />
    </Canvas>
  );
}

/* ---------- legends ---------- */
const W = "#fff";
const MAIN_LEGEND = [["零轴: 4.02", CYAN], ["高: 4.21", CYAN], ["低: 3.83", CYAN], ["布林: 3.99", W], ["上: 4.15", W], ["下: 3.84", W], ["均价: 3.87", W]];
const TREND_LEGEND = [
  ["多空趋势(3,9,3,3)", TXT], ["吸筹: 0.00", MAG], ["进场: 0.00", YELLOW], [": 0.00", YELLOW], ["派发: 0.00", "#00ff00"], [": 0.00", "#00ff00"], [": 11.63", GREY], [": 4.26", GREY],
  ["仓: 6.38", GREY], [": 29.72", "#f00"], [": 26.49", "#f00"], ["多: 24.36", "#f00"], [": 31.11", W], [": 29.45", W], ["筹: 27.63", W], [": 0.59", CYAN], [": 0.44", CYAN],
  ["动: 0.40", CYAN], [": 15.77", YELLOW], [": 11.00", YELLOW], ["趋: 8.28", YELLOW], ["B: 3.7", W],
];
const MOMENTUM_LEGEND = [
  ["主力进场", TXT], ["洗盘: 3.00", "#b4821e"], [": 0.00", W], ["动能进场: 0.00", "#008c1e"], [": 0.00", W], ["动能增强: 0.00", "#f00"], [": 0.00", W], ["拉升资金: 0.00", "#008c1e"], [": 0.00", W],
  ["主力资金: 0.00", "#f00"], [": -0.83", W], ["动能减弱: -0.85", GREY], [": 0.00", W], ["动能反弹: 0.00", CYAN], ["多头: 0.00", MAG], ["强势值: 0.00", MAG],
];
const SEQUENCE_LEGEND = [
  ["序列结构", TXT], ["五D: -0.03", W], ["四D: -0.03", W], ["三D: -0.03", W], ["二D: -0.04", W], ["一D: -0.04", W], ["DIFF: -0.05", YELLOW], ["DEA: -0.03", MAG],
  ["五M: -0.01", W], ["四M: -0.02", W], ["三M: -0.02", W], ["二M: -0.02", W], ["一M: -0.03", W], ["MACD: -0.03", YELLOW], ["金: 0.00", "#f00"], ["木: 0.00", "#00ff00"], ["底背: -", "#f00"], ["顶背: -", "#0a7a28"],
];
const Items = ({ list }) => list.map(([t, c], i) => <Item key={i} $color={c}>{t}</Item>);

const PERIODS = ["分时", "1分钟", "5分钟", "15分钟", "30分钟", "60分钟", "90分钟", "120分钟", "日线", "多周期", "更多"];
const TOOLS = ["复权", "叠加", "多股", "统计", "画线", "F10", "标记", "-自选", "返回"];

/* ---------- quote data ---------- */
const ASKS = [["卖五", "3.90", "2724"], ["卖四", "3.89", "4570"], ["卖三", "3.88", "3563"], ["卖二", "3.87", "4430"], ["卖一", "3.86", "240"]];
const BIDS = [["买一", "3.85", "3817"], ["买二", "3.84", "1100"], ["买三", "3.83", "894"], ["买四", "3.82", "707"], ["买五", "3.81", "597"]];
const FACTS = [
  ["现价", "3.86", RED, "今开", "3.8", RED], ["涨跌", "0.01", RED, "最高", "3.8", RED], ["涨幅", "0.26%", RED, "最低", "3.8", W],
  ["总量", "817917", GOLD, "量比", "0.7", GREEN], ["外盘", "370656", RED, "内盘", "44720", GREEN],
];
const BASICS = [["换手", "1.20%", TXT, "股本", "68.2", TXT, "亿"], ["净资", "1.41", TXT, "流通", "68.2", TXT, "亿"], ["收益㈢", "0.020", TXT, "PE(动)", "144.", TXT]];
const TRADES = [
  ["14:56", "3.86", "384", "S"], ["14:56", "3.87", "3", "B"], ["14:56", "3.86", "348", "S"], ["14:56", "3.87", "43", "B"], ["14:56", "3.86", "735", "S", "7"], ["14:56", "3.87", "88", "B"],
  ["14:56", "3.87", "429", "B", "2"], ["14:56", "3.87", "1266", "B", "7"], ["14:56", "3.86", "23", "S"], ["14:56", "3.86", "29", "S"], ["14:57", "3.87", "49", "B"],
];

function Cols({ widths }) {
  return <colgroup>{widths.map((w, i) => <col key={i} width={w} />)}</colgroup>;
}

function Book({ rows, tone, selected }) {
  return (
    <Block $foot={1}>
      <Table>
        <Cols widths={[54, 83, 134]} />
        <tbody>
          {rows.map(([name, price, vol]) => (
            <Row key={name}>
              <Name scope="row">{name}</Name>
              <Num $color={price === "3.85" ? W : tone} $boxed={name === selected}>{price}</Num>
              <Num $color={GOLD} $end={8}>{vol}</Num>
            </Row>
          ))}
        </tbody>
      </Table>
    </Block>
  );
}

function Facts({ rows, foot }) {
  return (
    <Block $foot={foot}>
      <Table>
        <Cols widths={[54, 83, 60, 74]} />
        <tbody>
          {rows.map(([a, b, bc, c, d, dc, unit]) => (
            <Row key={a}>
              <Name scope="row">{a}</Name>
              <Num $color={bc}>{b}</Num>
              <Name scope="row">{c.startsWith("PE") ? <><Strong>PE</Strong>(动)</> : c}</Name>
              <Num $color={dc} $end={unit ? 0 : 8}>{d}{unit && <Small>{unit}</Small>}</Num>
            </Row>
          ))}
        </tbody>
      </Table>
    </Block>
  );
}

function QuotePanel() {
  return (
    <Side>
      <Title>
        <Flag><b>R</b><span>500</span></Flag>
        <Code>601099</Code>
        太平洋
      </Title>
      <Facts rows={[["委比", "-37.20%", GREEN, "委差", "-8423", GREEN]]} foot={0} />
      <Book rows={ASKS} tone={RED} />
      <Book rows={BIDS} tone={GREEN} selected="买五" />
      <Facts rows={FACTS} foot={1} />
      <Facts rows={BASICS} foot={3} />
      <Block><Status $height={19}>交易状态: 闭市阶段<Strong $gap={3}>15:00:00</Strong></Status></Block>
      <Block>
        <Status $height={22}>
          主力净额
          <NoteIcon viewBox="0 0 13 13" fill="none" stroke={GREY}>
            <rect x="0.500" y="0.500" width="12" height="12" rx="2" />
            <path d="M3,3.500h7M3,5.500h7M3,7.500h7M3,9.500h7" />
          </NoteIcon>
          <FlowBar />
          <Strong $color={GREEN}>-285.5<Small>万</Small></Strong>
          <Strong $color={GREEN} $gap={15}>-1</Strong>
        </Status>
      </Block>
      <Table>
        <Cols widths={[54, 83, 76, 43, 15]} />
        <tbody>
          {TRADES.map(([t, p, v, s, n], i) => (
            <Row key={i} $height={18}>
              <Num $left $end={0}>{t}</Num>
              <Num $color={RED}>{p}</Num>
              <Num $color={v.length > 3 || v === "735" ? "#c000c0" : GOLD} $end={0}>{v}</Num>
              <Num $color={s === "S" ? GREEN : RED} $end={17}>{s}</Num>
              <Num $left $color={GREY}>{n}</Num>
            </Row>
          ))}
        </tbody>
      </Table>
      <Watermark>junzhuan.com</Watermark>
    </Side>
  );
}

export default function App() {
  return (
    <>
      <GlobalStyle />
      <Screen>
        <Main>
          <Toolbar>
            <Periods>
              <Stub>期</Stub>
              {PERIODS.map((p) => (
                <Period key={p} $active={p === "日线"}>
                  {p}
                  {p === "更多" && <Chevron viewBox="0 0 5 9" fill="none" stroke="#d8d8d8"><path d="M0.500,0.500l4,4l-4,4" /></Chevron>}
                </Period>
              ))}
            </Periods>
            <Tools>{TOOLS.map((t) => <Tool key={t} $strong={t === "返回"}>{t}</Tool>)}</Tools>
          </Toolbar>

          <Pane>
            <Plot>
              <Legend $height={18} $indent={0}>
                <Item>平洋(日线.前复权)</Item>
                <svg width="12" height="12" viewBox="0 0 12 12">
                  <circle cx="6" cy="6" r="6" fill="#646464" />
                  <path d="M3,4.500l3,3l3,-3" fill="none" stroke="#e0e0e0" strokeWidth="1.500" />
                </svg>
                <Item>轨道主图(1,0,1,7,19,1,55,20)</Item>
                <Items list={MAIN_LEGEND} />
                <Corner>
                  <svg width="12" height="12" viewBox="0 0 12 12" fill="none" stroke={GREY}><path d="M6,1l5,5l-5,5l-5,-5z" /></svg>
                  <svg width="12" height="12" viewBox="0 0 12 12" fill="none" stroke={GREY}>
                    <rect x="0.500" y="0.500" width="11" height="11" rx="1" />
                    <rect x="7" y="2" width="3" height="8" fill={GREY} stroke="none" />
                  </svg>
                </Corner>
              </Legend>
              <PriceChart />
            </Plot>
            <Axis $pad="23px 0 10px">
              {["5.50", "5.25", "5.00", "4.75", "4.50", "4.25", "4.00", "3.75", "3.50", "3.25", "3.00"].map((t, i) => <Tick key={t} $minor={i % 2 === 1}>{t}</Tick>)}
            </Axis>
          </Pane>

          <Pane>
            <Plot>
              <Legend $height={18} $fill><Items list={TREND_LEGEND} /></Legend>
              <TrendChart />
            </Plot>
            <Axis $pad="26px 0 61px"><Tick>100.0</Tick><Tick $minor>50.00</Tick><Tick>0.00</Tick></Axis>
          </Pane>

          <Pane>
            <Plot>
              <Legend $height={16}><Items list={MOMENTUM_LEGEND} /></Legend>
              <MomentumChart />
            </Plot>
            <Axis $pad="17px 0 0"><Tick>10.00</Tick></Axis>
          </Pane>

          <Pane>
            <Plot>
              <Legend $height={16} $fill><Items list={SEQUENCE_LEGEND} /></Legend>
              <SequenceChart />
            </Plot>
            <Axis $framed $pad="8px 0 20px"><Tick>0.50</Tick><Tick>0.25</Tick><Tick>0.00</Tick></Axis>
          </Pane>

          <TimeAxis><TimeScale /><PeriodName>日线</PeriodName></TimeAxis>
        </Main>
        <QuotePanel />
      </Screen>
    </>
  );
}
